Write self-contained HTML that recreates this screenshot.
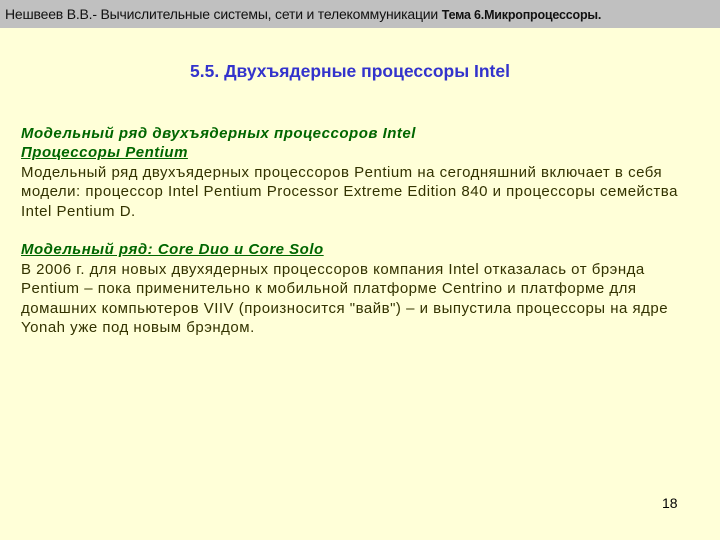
<!DOCTYPE html>
<html><head><meta charset="utf-8"><style>
body{margin:0;width:720px;height:540px;background:#ffffd8;font-family:"Liberation Sans",sans-serif;position:relative;overflow:hidden}
.hdr{position:absolute;left:0;top:0;width:720px;height:28px;background:#c0c0c0;font-size:14px;color:#111;line-height:28px;padding-left:5px;box-sizing:border-box;white-space:nowrap;letter-spacing:-0.2px}
.hdr b{font-size:12.5px}
.title{position:absolute;left:-10px;width:720px;top:61px;text-align:center;font-size:17.5px;color:#3333cc;font-weight:bold}
.txt{position:absolute;left:21px;top:124px;width:690px;font-size:15px;letter-spacing:0.5px;line-height:19.4px;color:#333300;white-space:nowrap}
.g{color:#006600;font-weight:bold;font-style:italic}
.u{text-decoration:underline}
.n{position:absolute;left:662px;top:495px;font-size:14px;color:#000}
</style></head><body>
<div class="hdr">Нешвеев В.В.- Вычислительные системы, сети и телекоммуникации <b>Тема 6.Микропроцессоры.</b></div>
<div class="title">5.5. Двухъядерные процессоры Intel</div>
<div class="txt">
<span class="g">Модельный ряд двухъядерных процессоров Intel</span><br>
<span class="g u">Процессоры Pentium</span><br>
Модельный ряд двухъядерных процессоров Pentium на сегодняшний включает в себя<br>
модели: процессор Intel Pentium Processor Extreme Edition 840 и процессоры семейства<br>
Intel Pentium D.<br><br>
<span class="g u">Модельный ряд: Core Duo и Core Solo</span><br>
В 2006 г. для новых двухядерных процессоров компания Intel отказалась от брэнда<br>
Pentium – пока применительно к мобильной платформе Centrino и платформе для<br>
домашних компьютеров VIIV (произносится "вайв") – и выпустила процессоры на ядре<br>
Yonah уже под новым брэндом.
</div>
<div class="n">18</div>
</body></html>
